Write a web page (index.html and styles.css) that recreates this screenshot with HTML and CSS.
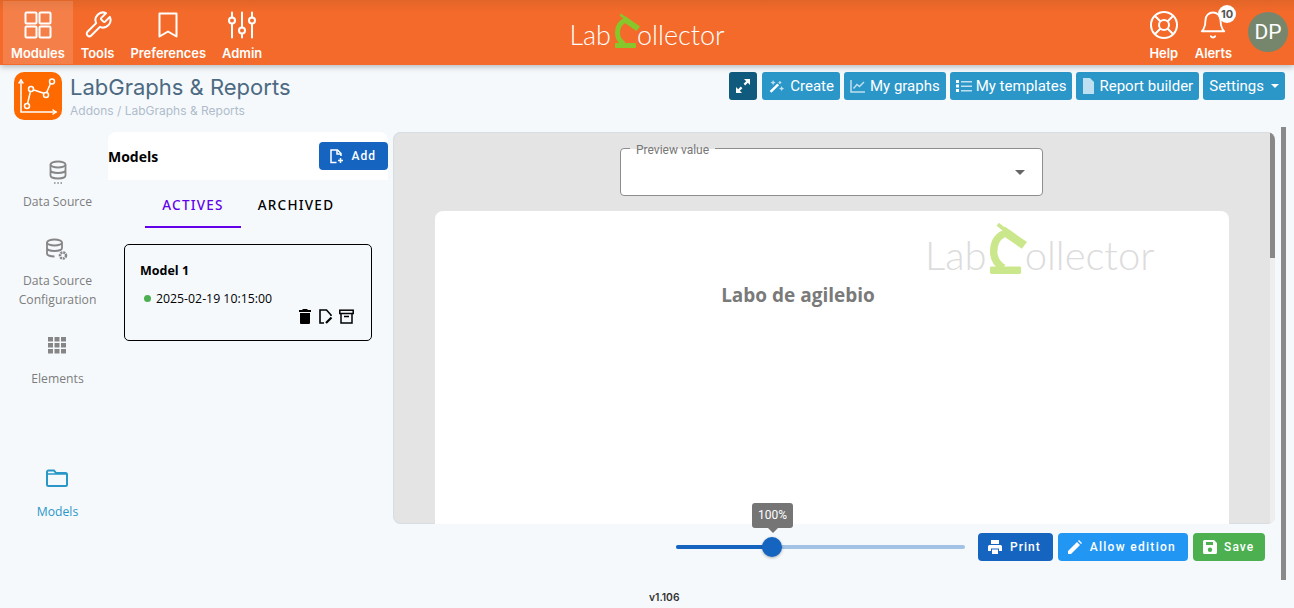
FILE: index.html
```html
<!DOCTYPE html>
<html lang="en">
<head>
  <meta charset="UTF-8">
  <title>LabGraphs &amp; Reports</title>
  <link rel="stylesheet" href="styles.css">
</head>
<body>

  <svg class="defs" width="0" height="0">
    <symbol id="scope" viewBox="0 0 25 35">
      <rect x="0" y="30" width="21" height="5" rx="1"/>
      <path d="M9 8C4 10.500 2.500 15 2.500 20C2.500 25 5 28.500 9 31" fill="none" stroke="currentColor" stroke-width="5"/>
      <path d="M10 3L25 13.500L21.500 18L7 8Z"/>
      <path d="M6 0.500L11 4.500L9.500 6.500L4.500 2.500Z"/>
    </symbol>
  </svg>

  <header class="nav">
    <div class="nav-left">
      <a class="nav-item active">
        <svg width="30" height="30" viewBox="0 0 30 30" fill="none" stroke="#fff" stroke-width="2"><rect x="2.500" y="2.500" width="11" height="11" rx="1"/><rect x="16.500" y="2.500" width="11" height="11" rx="1"/><rect x="2.500" y="16.500" width="11" height="11" rx="1"/><rect x="16.500" y="16.500" width="11" height="11" rx="1"/></svg>
        <span>Modules</span>
      </a>
      <a class="nav-item">
        <svg width="30" height="30" viewBox="0 0 24 24" fill="none" stroke="#fff" stroke-width="1.600" stroke-linecap="round" stroke-linejoin="round"><path d="M14.700 6.300a1 1 0 0 0 0 1.400l1.600 1.600a1 1 0 0 0 1.400 0l3.770-3.770a6 6 0 0 1-7.940 7.940l-6.910 6.910a2.120 2.120 0 0 1-3-3l6.910-6.910a6 6 0 0 1 7.940-7.940l-3.760 3.760z"/></svg>
        <span>Tools</span>
      </a>
      <a class="nav-item">
        <svg width="30" height="30" viewBox="0 0 30 30" fill="none" stroke="#fff" stroke-width="2" stroke-linejoin="round"><path d="M6.500 3.500h17v23L15 21.500 6.500 26.500z"/></svg>
        <span>Preferences</span>
      </a>
      <a class="nav-item">
        <svg width="30" height="30" viewBox="0 0 30 30" fill="none" stroke="#fff" stroke-width="2" stroke-linecap="round"><path d="M5 2.500v5M5 14v13.500M15 2.500v15M15 24v3.500M25 2.500v5M25 14v13.500"/><circle cx="5" cy="10.500" r="3"/><circle cx="15" cy="20.500" r="3"/><circle cx="25" cy="10.500" r="3"/></svg>
        <span>Admin</span>
      </a>
    </div>

    <div class="logo">
      <span>Lab</span>
      <svg class="logo-scope"><use href="#scope"/></svg>
      <span class="logo-rest">ollector</span>
    </div>

    <div class="nav-right">
      <a class="nav-item">
        <svg width="30" height="30" viewBox="0 0 30 30" fill="none" stroke="#fff" stroke-width="2"><circle cx="15" cy="15" r="13"/><circle cx="15" cy="15" r="5"/><path d="M5.800 5.800l5.700 5.700M24.200 5.800l-5.700 5.700M5.800 24.200l5.700-5.700M24.200 24.200l-5.700-5.700"/></svg>
        <span>Help</span>
      </a>
      <a class="nav-item alerts">
        <svg width="30" height="30" viewBox="0 0 24 24" fill="none" stroke="#fff" stroke-width="1.500" stroke-linecap="round" stroke-linejoin="round"><path d="M18 8A6 6 0 0 0 6 8c0 7-3 9-3 9h18s-3-2-3-9"/><path d="M13.730 21a2 2 0 0 1-3.460 0"/></svg>
        <span>Alerts</span>
        <b class="badge">10</b>
      </a>
      <div class="avatar">DP</div>
    </div>
  </header>

  <section class="page-head">
    <div class="app-icon">
      <svg width="48" height="48" viewBox="0 0 48 48" fill="none" stroke="#fff" stroke-width="1.500"><path d="M7 8v32h35" stroke-linecap="round"/><path d="M5 11l2-3 2 3M39 38l3 2-3 2" stroke-linecap="round"/><path d="M13 34l4-17 15 5 6-14"/><circle cx="13" cy="34" r="2.500" fill="#ff6a00"/><circle cx="17" cy="17" r="2.500" fill="#ff6a00"/><circle cx="32" cy="23" r="2.500" fill="#ff6a00"/><circle cx="38" cy="9.500" r="2.500" fill="#ff6a00"/></svg>
    </div>
    <div class="page-title">
      <h1>LabGraphs &amp; Reports</h1>
      <p>Addons / LabGraphs &amp; Reports</p>
    </div>
    <div class="toolbar">
      <button class="tool-btn expand">
        <svg width="16" height="16" viewBox="0 0 16 16" fill="#fff"><path d="M9 1h6v6l-2.200-2.200-2.600 2.600-1.600-1.600 2.600-2.600zM7 15H1V9l2.200 2.200 2.600-2.600 1.600 1.600-2.600 2.600z"/></svg>
      </button>
      <button class="tool-btn">
        <svg width="17" height="16" viewBox="0 0 20 16" fill="#bfe0f0"><path d="M2 14l9-9 2 2-9 9z" fill="#fff"/><path d="M12 4l2-2 2 2-2 2zM6 1l1 2 2 1-2 1-1 2-1-2-2-1 2-1zM16 8l1 2 2 1-2 1-1 2-1-2-2-1 2-1z"/></svg>
        Create
      </button>
      <button class="tool-btn tight">
        <svg width="16" height="16" viewBox="0 0 16 16" fill="none" stroke="#bfe0f0" stroke-width="1.500"><path d="M1 2v12h14"/><path d="M3.500 10.500l3.500-4 2.500 2 4.500-4.500"/></svg>
        My graphs
      </button>
      <button class="tool-btn tight">
        <svg width="16" height="16" viewBox="0 0 16 16" fill="#fff"><rect x="0" y="2" width="3" height="3"/><rect x="0" y="6.500" width="3" height="3"/><rect x="0" y="11" width="3" height="3"/><rect x="5" y="3" width="11" height="1.500" fill="#bfe0f0"/><rect x="5" y="7.500" width="11" height="1.500" fill="#bfe0f0"/><rect x="5" y="12" width="11" height="1.500" fill="#bfe0f0"/></svg>
        My templates
      </button>
      <button class="tool-btn tight">
        <svg width="13" height="16" viewBox="0 0 13 16" fill="#bfe0f0"><path d="M1 0h7l4 4v12H1z"/></svg>
        Report builder
      </button>
      <button class="tool-btn">Settings <i class="caret"></i></button>
    </div>
  </section>

  <main class="workspace">
    <aside class="side">
      <a class="side-item item-source">
        <svg width="20" height="24" viewBox="0 0 20 24" fill="none" stroke="#868686" stroke-width="1.800"><ellipse cx="10" cy="4.500" rx="7.500" ry="3"/><path d="M2.500 4.500v11c0 1.700 3.400 3 7.500 3s7.500-1.300 7.500-3v-11M2.500 10c0 1.700 3.400 3 7.500 3s7.500-1.300 7.500-3"/><path d="M6 23h1.500M9.300 23h1.500M12.500 23H14" stroke-width="1.500"/></svg>
        <span>Data Source</span>
      </a>
      <a class="side-item item-config">
        <svg width="24" height="23" viewBox="0 0 24 23" fill="none" stroke="#868686" stroke-width="1.800"><ellipse cx="9.500" cy="4.500" rx="7.500" ry="3"/><path d="M2 4.500v11c0 1.700 3.400 3 7.500 3M2 10c0 1.700 3.400 3 7.500 3s7.500-1.300 7.500-3v-5.500"/><circle cx="18" cy="17.500" r="3" stroke-width="2.500" stroke-dasharray="2 0.800"/></svg>
        <span>Data Source<br>Configuration</span>
      </a>
      <a class="side-item item-elements">
        <svg width="18" height="18" viewBox="0 0 18 18" fill="#868686"><rect x="0" y="1" width="5" height="4.500"/><rect x="6.500" y="1" width="5" height="4.500"/><rect x="13" y="1" width="5" height="4.500"/><rect x="0" y="7" width="5" height="4.500"/><rect x="6.500" y="7" width="5" height="4.500"/><rect x="13" y="7" width="5" height="4.500"/><rect x="0" y="13" width="5" height="4.500"/><rect x="6.500" y="13" width="5" height="4.500"/><rect x="13" y="13" width="5" height="4.500"/></svg>
        <span>Elements</span>
      </a>
      <a class="side-item item-models">
        <svg width="22" height="18" viewBox="0 0 22 18" fill="none" stroke="#2b96c8" stroke-width="2"><path d="M1 3a1.500 1.500 0 0 1 1.500-1.500h5.500l2 2.500h9.500A1.500 1.500 0 0 1 21 5.500v10a1.500 1.500 0 0 1-1.500 1.500h-17A1.500 1.500 0 0 1 1 15.500z"/><path d="M1 5h19" stroke-width="1.500"/></svg>
        <span>Models</span>
      </a>
    </aside>

    <section class="models">
      <div class="models-head">
        <h2>Models</h2>
        <button class="action-btn blue add-btn">
          <svg width="15" height="15" viewBox="0 0 15 15" fill="none" stroke="#fff" stroke-width="1.500"><path d="M7.500 13.500H2V1h6.500L12 4.500V7"/><path d="M8 1v4h4M11.500 9v5M9 11.500h5"/></svg>
          Add
        </button>
      </div>
      <div class="tabs">
        <a class="tab selected">ACTIVES</a>
        <a class="tab">ARCHIVED</a>
      </div>
      <div class="model-card">
        <h3>Model 1</h3>
        <div class="model-date"><i class="dot"></i>2025-02-19 10:15:00</div>
        <div class="model-actions">
          <svg width="14" height="15" viewBox="0 0 14 15"><path d="M5 0h4l1 1h3v2H1V1h3zM2 4h10v10a1 1 0 0 1-1 1H3a1 1 0 0 1-1-1z"/></svg>
          <svg width="15" height="15" viewBox="0 0 15 15" fill="none" stroke="#000" stroke-width="1.600"><path d="M6 14H2V1h6.500L13 6v1"/><path d="M8 14l5.500-5.500" stroke-width="2.200"/></svg>
          <svg width="15" height="15" viewBox="0 0 15 15" fill="none" stroke="#000" stroke-width="1.500"><rect x="0.800" y="1.200" width="13.400" height="3.300"/><path d="M2 4.500V14h11V4.500M5 7.500h5"/></svg>
        </div>
      </div>
    </section>

    <section class="preview-col">
      <div class="preview">
        <div class="field">
          <span class="field-label">Preview value</span>
          <i class="field-arrow"></i>
        </div>
        <div class="paper">
          <div class="logo paper-logo">
            <span>Lab</span>
            <svg class="logo-scope"><use href="#scope"/></svg>
            <span class="logo-rest">ollector</span>
          </div>
          <h2 class="paper-title">Labo de agilebio</h2>
        </div>
        <div class="inner-scroll"><div class="inner-thumb"></div></div>
      </div>

      <div class="controls">
        <div class="slider">
          <div class="slider-fill"></div>
          <div class="slider-thumb"><span class="slider-tip">100%</span></div>
        </div>
        <button class="action-btn blue">
          <svg width="14" height="14" viewBox="0 0 14 14" fill="#fff"><path d="M3 0h8v4H3zM1.500 5h11A1.500 1.500 0 0 1 14 6.500V11h-3V8.500H3V11H0V6.500A1.500 1.500 0 0 1 1.500 5zM4 9.500h6V14H4z"/></svg>
          Print
        </button>
        <button class="action-btn light">
          <svg width="14" height="14" viewBox="0 0 14 14" fill="#fff"><path d="M0 14v-3L9 2l3 3-9 9zM10 1l1-1 3 3-1 1z"/></svg>
          Allow edition
        </button>
        <button class="action-btn green">
          <svg width="14" height="14" viewBox="0 0 14 14" fill="#fff"><path d="M1.500 0H11l3 3v9.500a1.500 1.500 0 0 1-1.500 1.500h-11A1.500 1.500 0 0 1 0 12.500v-11A1.500 1.500 0 0 1 1.500 0zM3 2v3h7V2zM7 7.500a2.200 2.200 0 1 0 0 4.400 2.200 2.200 0 0 0 0-4.400z" fill-rule="evenodd"/></svg>
          Save
        </button>
      </div>
      <div class="outer-scroll"></div>
    </section>
  </main>

  <footer class="version">v1.106</footer>

</body>
</html>
```

FILE: styles.css
```css
* {
  box-sizing: border-box;
}

html, body {
  height: 100%;
}

body {
  margin: 0;
  background-color: #f5f9fc;
  font-family: Inter, sans-serif;
  overflow: hidden;
  display: flex;
  flex-direction: column;
}

.defs {
  position: absolute;
}

button {
  border: none;
  cursor: pointer;
}

/* top bar */

.nav {
  height: 65px;
  flex-shrink: 0;
  display: grid;
  grid-template-columns: 1fr auto 1fr;
  align-items: stretch;
  background: linear-gradient(#e26528, #f46a2a 12px);
  box-shadow: 0 2px 6px rgba(0, 0, 0, 0.25);
  padding-top: 1px;
  position: relative;
  z-index: 2;
}

.nav-left {
  display: flex;
  padding-left: 3px;
}

.nav-right {
  display: flex;
  justify-content: flex-end;
  padding-right: 6px;
}

.nav-item {
  display: flex;
  flex-direction: column;
  align-items: center;
  justify-content: flex-end;
  gap: 6px;
  height: 63px;
  padding: 0 8px 3px;
  color: white;
  font-size: 12.900px;
  font-weight: 600;
  position: relative;
}

.nav-item.active {
  background-color: rgba(255, 255, 255, 0.14);
}

.alerts {
  margin-right: 8px;
}

.badge {
  position: absolute;
  top: 4px;
  right: 4px;
  width: 18px;
  height: 18px;
  border-radius: 50%;
  background: white;
  color: #555;
  font-size: 11px;
  font-weight: 700;
  text-align: center;
  line-height: 18px;
}

.avatar {
  width: 40px;
  height: 40px;
  margin-top: 11px;
  border-radius: 50%;
  background-color: #76866c;
  color: white;
  font-family: Roboto, sans-serif;
  font-size: 21px;
  text-align: center;
  line-height: 40px;
}

.logo {
  display: flex;
  align-items: flex-end;
  height: 35px;
  margin-top: 12px;
  font-family: Lato, sans-serif;
  font-weight: 300;
  font-size: 27px;
  line-height: 26px;
  color: white;
}

.logo-scope {
  width: 25px;
  height: 35px;
  margin-left: 4px;
  fill: #86c82c;
  color: #86c82c;
  flex-shrink: 0;
}

.logo-rest {
  margin-left: -3px;
}

/* page heading */

.page-head {
  display: flex;
  align-items: flex-start;
  padding: 7px 9px 0 14px;
  height: 67px;
  flex-shrink: 0;
}

.app-icon {
  width: 48px;
  height: 48px;
  border-radius: 10px;
  background-color: #ff6a00;
  flex-shrink: 0;
}

.page-title {
  margin-left: 8px;
}

.page-title h1 {
  margin: 1px 0 2px;
  font-size: 22px;
  font-weight: 400;
  line-height: 28px;
  color: #4d6a82;
}

.page-title p {
  margin: 0;
  font-size: 12px;
  color: #b0bccb;
}

.toolbar {
  margin-left: auto;
  display: flex;
  gap: 4px;
}

.tool-btn {
  height: 28px;
  padding: 0 6px;
  display: flex;
  align-items: center;
  gap: 5px;
  border-radius: 3px;
  background-color: #2b96c8;
  color: white;
  font-family: Roboto, sans-serif;
  font-size: 15px;
}

.tool-btn.tight {
  gap: 4px;
}

.tool-btn.expand {
  width: 28px;
  justify-content: center;
  margin-right: 1px;
  background-color: #0f5a7d;
}

.caret {
  margin-left: 2px;
  border-left: 4px solid transparent;
  border-right: 4px solid transparent;
  border-top: 4px solid white;
}

/* main area */

.workspace {
  flex: 1;
  display: flex;
  align-items: flex-start;
}

.side {
  width: 108px;
  flex-shrink: 0;
  display: flex;
  flex-direction: column;
  align-items: center;
  padding: 28px 0 0 7px;
  font-family: "Open Sans", sans-serif;
  font-size: 12.200px;
  line-height: 19px;
  color: #7d7d7d;
  text-align: center;
}

.side-item {
  display: flex;
  flex-direction: column;
  align-items: center;
}

.side-item span {
  margin-top: 8px;
}

.item-config {
  margin-top: 27px;
}

.item-config span {
  margin-top: 10px;
}

.item-elements {
  margin-top: 27px;
}

.item-elements span {
  margin-top: 15px;
}

.item-models {
  margin-top: 81px;
  color: #2b96c8;
}

.item-models span {
  margin-top: 15px;
}

.models {
  width: 280px;
  flex-shrink: 0;
}

.models-head {
  height: 48px;
  display: flex;
  align-items: center;
  justify-content: space-between;
  background: white;
  border-radius: 8px 8px 0 0;
}

.models-head h2 {
  margin: 0;
  font-family: "Open Sans", sans-serif;
  font-size: 14px;
  font-weight: 700;
  color: black;
}

.action-btn {
  height: 28px;
  display: flex;
  align-items: center;
  gap: 8px;
  padding: 0 12px 0 10px;
  border-radius: 4px;
  color: white;
  font-family: Roboto, sans-serif;
  font-size: 12px;
  font-weight: 500;
  letter-spacing: 1px;
}

.action-btn.blue {
  background-color: #1565c0;
}

.action-btn.light {
  background-color: #2196f3;
  letter-spacing: 1.300px;
}

.action-btn.green {
  background-color: #4caf50;
}

.tabs {
  display: flex;
  margin-left: 37px;
  height: 48px;
}

.tab {
  width: 96px;
  font-family: "Noto Sans", sans-serif;
  font-size: 13.500px;
  font-weight: 500;
  letter-spacing: 1.250px;
  line-height: 50px;
  text-align: center;
  color: black;
}

.tab.selected {
  color: #6200ea;
  border-bottom: 2px solid #6200ea;
}

.tab + .tab {
  margin-left: 7px;
}

.model-card {
  width: 248px;
  height: 97px;
  margin: 16px 0 0 16px;
  padding: 17px 15px 0;
  border: 1px solid black;
  border-radius: 5px;
  font-family: "Open Sans", sans-serif;
  color: black;
}

.model-card h3 {
  margin: 0;
  font-size: 12.500px;
  font-weight: 700;
}

.model-date {
  display: flex;
  align-items: center;
  margin-top: 11px;
  padding-left: 4px;
  font-size: 12.300px;
}

.dot {
  width: 7px;
  height: 7px;
  margin-right: 5px;
  border-radius: 50%;
  background-color: #4caf50;
}

.model-actions {
  display: flex;
  justify-content: flex-end;
  gap: 6px;
  margin-top: 2px;
  margin-right: 2px;
}

/* preview */

.preview-col {
  flex: 1;
  margin-left: 5px;
  padding-right: 8px;
  position: relative;
}

.preview {
  width: 882px;
  height: 392px;
  background-color: #e4e4e4;
  box-shadow: inset 0 0 0 1px #d8dde2;
  border-radius: 8px;
  overflow: hidden;
  position: relative;
  padding-top: 16px;
}

.field {
  width: 423px;
  height: 48px;
  margin-left: 227px;
  background: white;
  border: 1px solid #8d8d8d;
  border-radius: 4px;
  position: relative;
}

.field-label {
  position: absolute;
  top: -6px;
  left: 9px;
  padding: 0 6px;
  background: linear-gradient(#e4e4e4 6px, white 6px);
  font-family: Roboto, sans-serif;
  font-size: 12px;
  line-height: 14px;
  color: #777;
}

.field-arrow {
  position: absolute;
  right: 17px;
  top: 21px;
  border-left: 5px solid transparent;
  border-right: 5px solid transparent;
  border-top: 5px solid #666;
}

.paper {
  width: 794px;
  height: 330px;
  margin: 15px 0 0 42px;
  padding-top: 11px;
  background: white;
  border-radius: 8px;
}

.paper-logo {
  width: 227px;
  height: 52px;
  margin: 0 0 0 490px;
  font-size: 40px;
  line-height: 37px;
  color: #dcdcdc;
}

.paper-logo .logo-scope {
  width: 37px;
  height: 52px;
  margin-left: 3px;
  fill: #cbe78c;
  color: #cbe78c;
}

.paper-logo .logo-rest {
  margin-left: -2px;
}

.paper-title {
  margin: 8px 0 0 0;
  padding-right: 68px;
  text-align: center;
  font-family: "Open Sans", sans-serif;
  font-size: 19px;
  font-weight: 700;
  color: #7a7a7a;
}

.inner-scroll {
  position: absolute;
  top: 0;
  right: 0;
  bottom: 0;
  width: 5px;
  background-color: #eeeeee;
}

.inner-thumb {
  width: 5px;
  height: 126px;
  background-color: #888;
}

.outer-scroll {
  position: absolute;
  top: -5px;
  right: 8px;
  width: 5px;
  height: 453px;
  background-color: #8a8a8a;
}

.controls {
  display: flex;
  align-items: center;
  gap: 5px;
  margin-top: 9px;
  padding-left: 283px;
}

.controls .action-btn.green {
  gap: 7px;
  padding-right: 11px;
}

.slider {
  width: 289px;
  height: 4px;
  margin-right: 8px;
  background-color: #a2c2e6;
  border-radius: 2px;
  position: relative;
}

.slider-fill {
  width: 96px;
  height: 4px;
  border-radius: 2px;
  background-color: #1565c0;
}

.slider-thumb {
  position: absolute;
  left: 86px;
  top: -8px;
  width: 20px;
  height: 20px;
  border-radius: 50%;
  background-color: #1565c0;
  box-shadow: 0 1px 3px rgba(0, 0, 0, 0.3);
}

.slider-tip {
  position: absolute;
  left: -10px;
  top: -34px;
  width: 41px;
  height: 25px;
  border-radius: 3px;
  background-color: #757575;
  color: white;
  font-family: Roboto, sans-serif;
  font-size: 12px;
  line-height: 25px;
  text-align: center;
}

.slider-tip::after {
  content: "";
  position: absolute;
  left: 16px;
  bottom: -5px;
  border-left: 5px solid transparent;
  border-right: 5px solid transparent;
  border-top: 5px solid #757575;
}

.version {
  position: absolute;
  left: 649px;
  top: 591px;
  font-size: 10.300px;
  font-weight: 600;
  color: #333;
}
```
